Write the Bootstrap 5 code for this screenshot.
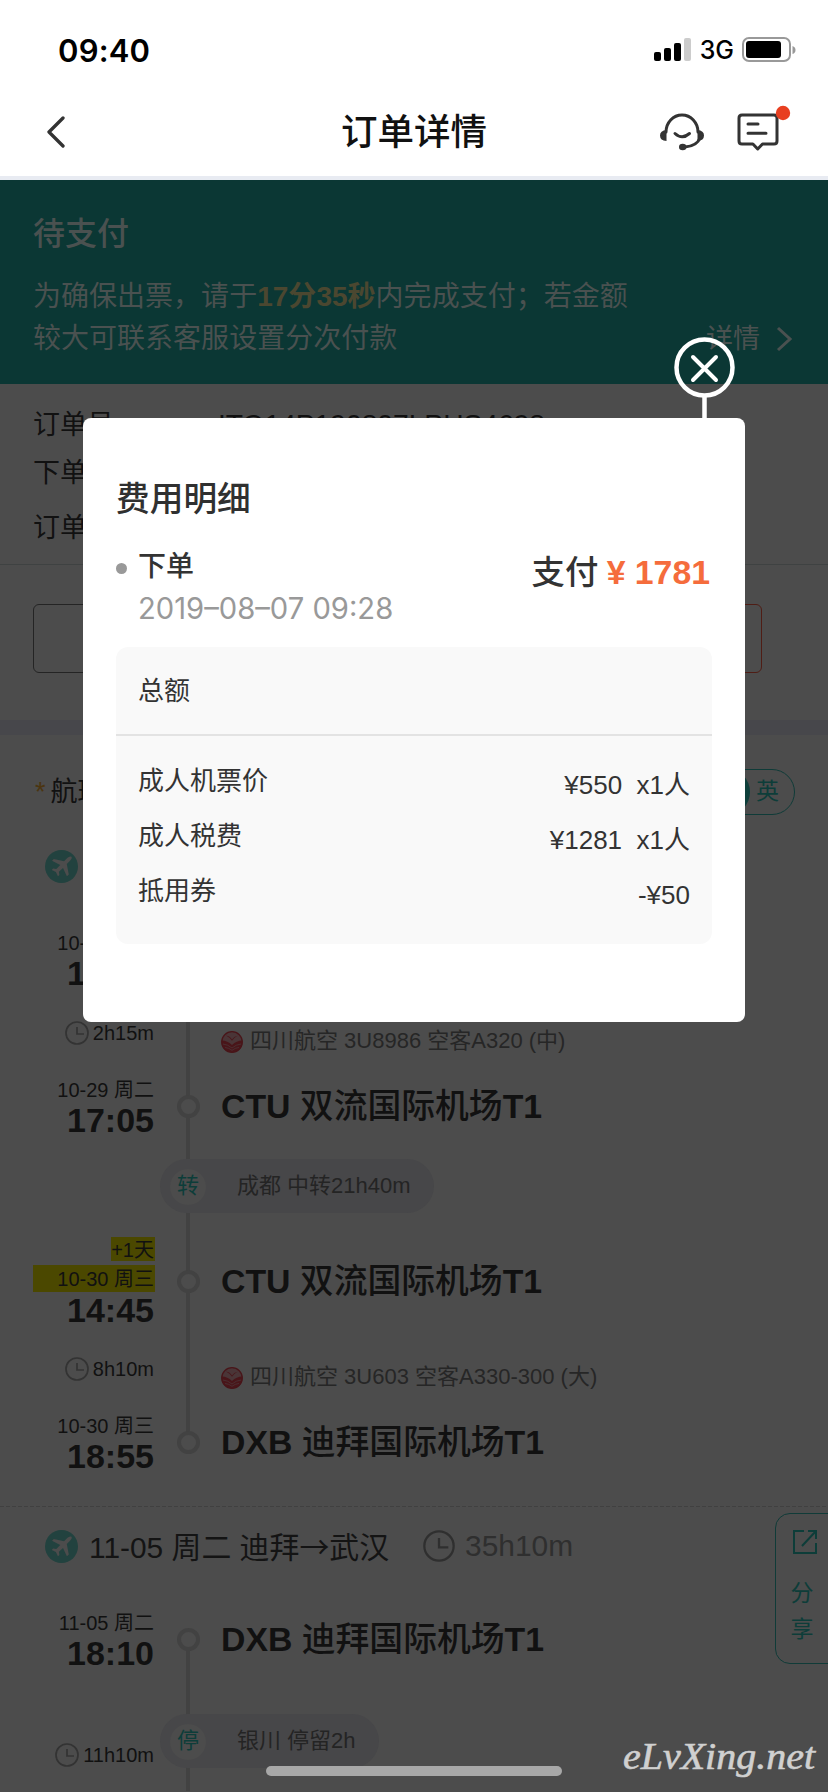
<!DOCTYPE html>
<html lang="zh-CN">
<head>
<meta charset="utf-8">
<meta name="viewport" content="width=device-width, initial-scale=1">
<title>订单详情</title>
<link href="https://cdn.jsdelivr.net/npm/bootstrap@5.3.0/dist/css/bootstrap.min.css" rel="stylesheet">
<style>
body{width:828px;height:1792px;overflow:hidden;position:relative;background:#4c4c4c;color:#111;font-family:"Liberation Sans","Noto Sans CJK SC",sans-serif;line-height:1.2}
svg{display:block;flex:none}
.status{height:100px;padding:0 32px 0 58px}
.clock-time{font:600 31px/1 Inter,sans-serif;letter-spacing:.2px}
.net{font:500 25px/1 Inter,sans-serif}
.titlebar{height:76px;grid-template-columns:1fr auto 1fr}
.back{margin:16px 0 0 47px}
.tools{margin:5px 36px 0 auto}
.page-title{font-size:36.5px;font-weight:500;color:#111;padding-top:11px}
.top-strip{height:4px;background:#e8ebf2}
.notice{height:204px;background:#0b3734;color:#4a5150;padding:32px 33px 0}
.notice h2{font-size:32px;line-height:44px;font-weight:500;margin:0 0 20px}
.notice-text{font-size:28px;line-height:42px;letter-spacing:.02px}
.notice-text b{color:#4b4730}
.more{font-size:27px;margin-right:3px}
.info{height:181px;border-bottom:1px solid #3f4242;font-size:27px;padding:21px 33px 0}
.info div{height:38px;line-height:38px;white-space:nowrap}
.info .lab{display:inline-block;width:185px}
.info .code{font-size:28.2px}
.actions{height:155px;padding:39px 66px 0 33px}
.act{height:69px;border:1px solid #242424;border-radius:6px;width:340px}
.act.pay{border-color:#4f1d15}
.band{height:15px;background:#47474b;margin-bottom:20px}
.seg-title{height:72px;padding:2px 33px 0 35px;font-size:27px}
.star{color:#4b3510;margin-right:5px}
.lang{height:46px;border:1.5px solid #0f3b38;border-radius:23px;width:110px;color:#0d3d39;font-size:23px;padding-right:15px}
.lang .on{width:44px;height:46px;border-radius:50%;background:#0e3f3b;margin-right:6px}
.leg-head{height:78px;padding-left:45px;font-size:29.9px;color:#141414}
.leg-head .route{margin-left:11px;padding-top:3px}
.leg-head .dur{color:#2f2f2f;gap:10px;margin-left:34px}
.leg{display:grid;grid-template-columns:155px 66px 1fr;align-items:center;padding-top:24px;background:linear-gradient(#424242,#424242) 186px 54px/4px var(--rail) no-repeat}
.when{text-align:right;font-size:20px}
.when div{line-height:26px;height:26px;padding:1px 1px 0 0}
.when .hour{font-size:34px;font-weight:700;line-height:35px;height:34px;color:#111}
.node{width:23px;height:23px;border:4px solid #424242;border-radius:50%;background:#4c4c4c;justify-self:center}
.port{font-size:33.8px;font-weight:700;color:#111;white-space:nowrap}
.port span{font-weight:500}
.ride{height:87px;font-size:20px;padding:1px 1px 0 0}
.ride.fl{font-size:22px;color:#262626;padding-top:18px}
.ride.fl svg{margin-right:7px}
.stay{grid-column:2/4;justify-self:start;height:54px;border-radius:27px;background:#474749;margin-left:5px;padding:1px 23px 0 10px;font-size:22px;color:#242424}
.stay i{font-style:normal;width:36px;height:36px;border-radius:50%;background:#4c4c4c;color:#0d3d39;margin-right:31px}
.plus{display:inline-block;background:#4b4800;line-height:24px!important;height:24px!important;margin-bottom:4px}
.hl{background:#4b4800;height:27px!important;margin-left:33px}
.dash{height:1px;margin-top:34px;background:repeating-linear-gradient(90deg,#404040 0 4px,transparent 4px 6px)}
.share{position:absolute;left:775px;top:1513px;width:54px;height:151px;border:1.5px solid #103b38;border-radius:15px 0 0 15px;color:#0d3d39;font-size:23px;line-height:36px;padding-top:15px}
.share svg{margin:0 0 20px 5px}
.fees{position:absolute;left:83px;top:418px;width:662px;height:604px;background:#fff;border-radius:8px;padding:61px 33px 0;color:#333}
.fees h3{font-size:33.7px;line-height:40px;font-weight:500;margin:0;color:#303030}
.closer{position:absolute;left:673px;top:336px}
.order{margin-top:26px;height:81px}
.order .step{font-size:28px;height:44px;font-weight:500}
.dot{width:11px;height:11px;border-radius:50%;background:#999;margin:3px 11px 0 0}
.stamp{font:400 29.2px/34px Inter,sans-serif;color:#999;margin:3px 0 0 22px}
.amount{font-size:33.4px;font-weight:500;padding:7px 2px 0 0;word-spacing:-1px}
.amount b{color:#f56c3c;font-size:33.8px;word-spacing:0}
.panel{margin-top:21px;height:297px;background:#f9f9f9;border-radius:12px;font-size:26px}
.panel .sum{height:89px;border-bottom:2px solid #e3e3e3;padding:2px 22px 0}
.panel .fee{height:55px;padding:0 22px}
.fee span+span{padding-top:9px;white-space:pre}
.home{position:absolute;left:266px;top:1766px;width:296px;height:10px;border-radius:5px;background:#a8a8a8}
.water{position:absolute;left:618px;top:1730px}
</style>
</head>
<body>
<svg width="0" height="0" class="position-absolute">
<defs>
<symbol id="ck" viewBox="0 0 24 24"><circle cx="12" cy="12" r="11" fill="none" stroke="currentColor" stroke-width="1.7"/><path d="M12 6v7h7" fill="none" stroke="currentColor" stroke-width="1.7"/></symbol>
<symbol id="pl" viewBox="0 0 33 33"><circle cx="16.5" cy="16.5" r="16.5" fill="#22423f"/><path d="M26.500 6.800c-1.200-1-3 .1-4.200 1.300l-3.300 3.200-10.200-2.300-1.800 1.800 8.200 4.200-3.900 4.100-3.200-.6-1.300 1.400 4.100 2.100 2 4.300 1.500-1.300-.5-3.300 4.100-3.800 3.900 8.300 1.900-1.800-2-10.300 3.200-3.300c1.200-1.200 2.300-2.900 1.500-4z" fill="#4c4c4c"/></symbol>
<symbol id="air" viewBox="0 0 22 22"><circle cx="11" cy="11" r="10.300" fill="#4a3537" stroke="#491519" stroke-width="1.200"/><path d="M5 4.500q4 .5 6 4 2-3.200 5.500-3.700-3 1.500-5.500 5Q9 6.500 5 4.500z" fill="#491519"/><path d="M.7 9.500q5.800 0 10.300 4.500 4.500-4.500 10.300-4.500 .8 6-3.300 9.300-7 5-14 0Q0 15.500.7 9.500z" fill="#491519"/><path d="M2 13q5 .5 9 4 4-3.500 9-4M4 16.500q4 .3 7 2.800 3-2.500 7-2.800" fill="none" stroke="#4a3537" stroke-width=".8"/></symbol>
</defs>
</svg>

<header class="bg-white">
<div class="status d-flex align-items-center justify-content-between text-black">
<span class="clock-time">09:40</span>
<div class="d-flex align-items-center">
<svg width="38" height="24" viewBox="0 0 38 24"><rect x="0" y="14" width="7" height="9" rx="2"/><rect x="10" y="10" width="7" height="13" rx="2"/><rect x="20" y="5" width="7" height="18" rx="2"/><rect x="30" y="0" width="7" height="23" rx="2" fill="#ccc"/></svg>
<span class="net ms-2 me-2">3G</span>
<svg width="54" height="26" viewBox="0 0 54 26"><rect x="1" y="1" width="47" height="23" rx="6" fill="none" stroke="#999" stroke-width="2"/><rect x="4" y="4" width="35" height="17" rx="3"/><path d="M50.500 9q3 1 3 4t-3 4z" fill="#999"/></svg>
</div>
</div>
<div class="titlebar d-grid">
<svg class="back" width="18" height="32" viewBox="0 0 18 32"><path d="M16 2L2 16l14 14" fill="none" stroke="#333" stroke-width="3.300" stroke-linecap="round" stroke-linejoin="round"/></svg>
<div class="page-title">订单详情</div>
<svg class="tools" width="132" height="50" viewBox="0 0 132 50" fill="none" stroke="#333" stroke-width="3" stroke-linecap="round">
<path d="M6 27a16 17 0 0 1 32 0M40 33q-3 8-15 9M15 28.500q7 6.500 14.500 0"/>
<path d="M6.500 25v11Q0 35.500 0 30.500T6.500 25zM37.500 25v11q6.500-.5 6.500-5.500T37.500 25z" fill="#333" stroke="none"/><ellipse cx="22.700" cy="42" rx="3.700" ry="3.200" fill="#333" stroke="none"/>
<path d="M82 10h32q3 0 3 3v23q0 3-3 3h-11.500l-4.800 5-4.800-5H82q-3 0-3-3V13q0-3 3-3z" stroke-linejoin="round"/><path d="M88 19h10M88 28.300h18"/><circle cx="123" cy="8" r="7.200" fill="#e83f20" stroke="none"/></svg>
</div>
<div class="top-strip"></div>
</header>

<section class="notice">
<h2>待支付</h2>
<div class="notice-text">为确保出票，请于<b>17分35秒</b>内完成支付；若金额</div>
<div class="notice-text d-flex justify-content-between"><span>较大可联系客服设置分次付款</span><span class="more d-flex align-items-center">详情<svg class="ms-3" width="16" height="26" viewBox="0 0 16 26"><path d="M2 2l12 11L2 24" fill="none" stroke="#4a5150" stroke-width="3"/></svg></span></div>
</section>
<section class="info"><div><span class="lab">订单号</span><span class="code">ITO14P190807LPHS4698</span></div><div style="margin-top:11px">下单</div><div style="margin-top:17px">订单</div></section>
<section class="actions d-flex justify-content-between"><div class="act"></div><div class="act pay"></div></section>
<div class="band"></div>
<div class="seg-title d-flex align-items-center justify-content-between"><span><span class="star">*</span>航班</span><div class="lang d-flex align-items-center justify-content-end"><span class="on"></span>英</div></div>
<div class="leg-head d-flex align-items-center"><svg width="33" height="33"><use href="#pl"/></svg></div>
<section class="leg" style="--rail:483px">
<div class="when"><div>10-29 周二</div><div class="hour">12:00</div></div><span class="node"></span><div></div>
<div class="ride d-flex align-items-center justify-content-end gap-1"><svg width="24" height="24" color="#333"><use href="#ck"/></svg>2h15m</div><span></span><div class="ride fl d-flex align-items-center"><svg width="22" height="22"><use href="#air"/></svg>四川航空 3U8986 空客A320 (中)</div>
<div class="when"><div>10-29 周二</div><div class="hour">17:05</div></div><span class="node"></span><div class="port">CTU <span>双流国际机场</span>T1</div>
<div class="stay d-flex align-items-center" style="margin-top:23px;margin-bottom:24px"><i class="d-flex align-items-center justify-content-center">转</i>成都 中转21h40m</div>
<div class="when"><div class="plus">+1天</div><div class="hl">10-30 周三</div><div class="hour" style="height:33px">14:45</div></div><span class="node"></span><div class="port">CTU <span>双流国际机场</span>T1</div>
<div class="ride d-flex align-items-center justify-content-end gap-1"><svg width="24" height="24" color="#333"><use href="#ck"/></svg>8h10m</div><span></span><div class="ride fl d-flex align-items-center"><svg width="22" height="22"><use href="#air"/></svg>四川航空 3U603 空客A330-300 (大)</div>
<div class="when"><div>10-30 周三</div><div class="hour">18:55</div></div><span class="node"></span><div class="port">DXB <span>迪拜国际机场</span>T1</div>
</section>
<div class="dash"></div>
<div class="leg-head d-flex align-items-center"><svg width="33" height="33"><use href="#pl"/></svg><span class="route">11-05 周二 迪拜<span style="font-family:'Noto Sans CJK SC',sans-serif;line-height:1">→</span>武汉</span><span class="dur d-flex align-items-center"><svg width="32" height="32"><use href="#ck"/></svg>35h10m</span></div>
<section class="leg" style="--rail:200px">
<div class="when"><div>11-05 周二</div><div class="hour">18:10</div></div><span class="node"></span><div class="port">DXB <span>迪拜国际机场</span>T1</div>
<div class="d-flex align-items-center justify-content-end gap-1" style="font-size:20px;padding:50px 1px 0 0"><svg width="24" height="24" color="#333"><use href="#ck"/></svg>11h10m</div>
<div class="stay d-flex align-items-center" style="margin-top:45px;margin-bottom:23px"><i class="d-flex align-items-center justify-content-center">停</i>银川 停留2h</div>
</section>

<aside class="share d-flex flex-column align-items-center"><svg width="26" height="26" viewBox="0 0 26 26"><path d="M12 2H2v22h22V14M16 2h8v8M24 2L10 17" fill="none" stroke="#0d3d39" stroke-width="2"/></svg><span>分</span><span>享</span></aside>

<svg class="closer" width="64" height="84" viewBox="0 0 64 84" fill="none" stroke="#fff"><circle cx="31.500" cy="31.500" r="28" stroke-width="4.500"/><path d="M20 21l23 23M43 21L20 44" stroke-width="4" stroke-linecap="round"/><path d="M31.500 60v24" stroke-width="4.500"/></svg>
<main class="fees">
<h3>费用明细</h3>
<div class="order d-flex justify-content-between">
<div><div class="step d-flex align-items-center"><span class="dot"></span>下单</div><div class="stamp">2019–08–07 09:28</div></div>
<div class="amount">支付 <b>¥ 1781</b></div>
</div>
<div class="panel">
<div class="sum d-flex align-items-center">总额</div>
<div style="padding-top:18px">
<div class="fee d-flex align-items-center justify-content-between"><span>成人机票价</span><span>¥550  x1人</span></div>
<div class="fee d-flex align-items-center justify-content-between"><span>成人税费</span><span>¥1281  x1人</span></div>
<div class="fee d-flex align-items-center justify-content-between"><span>抵用券</span><span>-¥50</span></div>
</div>
</div>
</main>
<div class="home"></div>
<svg class="water" width="205" height="62" viewBox="0 0 205 62"><text x="5" y="39" textLength="192" lengthAdjust="spacingAndGlyphs" font-family="Liberation Serif, cursive" font-style="italic" font-size="37" fill="#d0d0d0" stroke="#d0d0d0" stroke-width=".6">eLvXing.net</text></svg>
<script src="https://cdn.jsdelivr.net/npm/bootstrap@5.3.0/dist/js/bootstrap.bundle.min.js"></script>
</body>
</html>
